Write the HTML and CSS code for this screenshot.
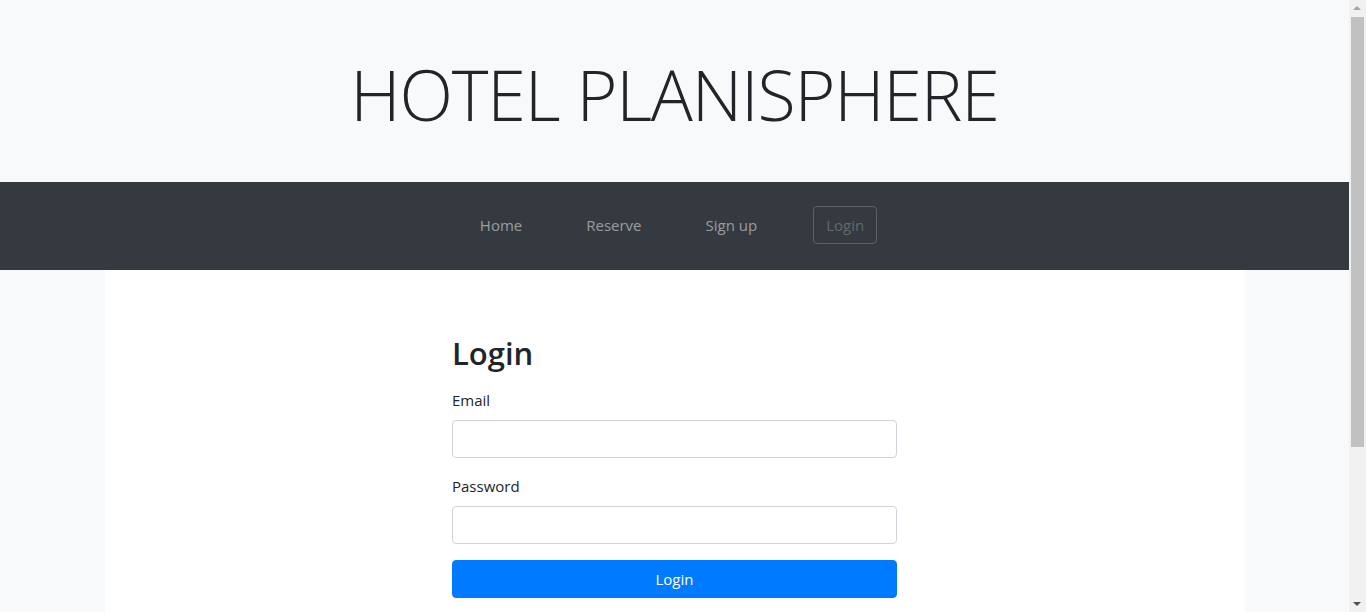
FILE: index.html
```html
<!DOCTYPE html>
<html lang="en">
<head>
<meta charset="utf-8">
<title>Login | HOTEL PLANISPHERE</title>
<link rel="stylesheet" href="styles.css">
</head>
<body>
<div class="page">
  <header class="masthead">
    <h1 class="brand">HOTEL PLANISPHERE</h1>
  </header>
  <nav class="navbar">
    <ul class="nav-list">
      <li><a class="nav-link" href="#">Home</a></li>
      <li><a class="nav-link" href="#">Reserve</a></li>
      <li><a class="nav-link" href="#">Sign up</a></li>
      <li><a class="nav-btn" href="#">Login</a></li>
    </ul>
  </nav>
  <main class="container">
    <div class="form-col">
      <h2 class="title">Login</h2>
      <form class="login-form">
        <div class="form-group">
          <label for="email">Email</label>
          <input id="email" type="email" class="form-control">
        </div>
        <div class="form-group">
          <label for="password">Password</label>
          <input id="password" type="password" class="form-control">
        </div>
        <button type="button" class="btn-primary">Login</button>
      </form>
    </div>
  </main>
</div>
<div class="scrollbar" aria-hidden="true">
  <span class="sb-arrow sb-up"></span>
  <span class="sb-thumb"></span>
  <span class="sb-arrow sb-down"></span>
</div>
</body>
</html>
```
FILE: styles.css
```css
* { box-sizing: border-box; }
html, body { margin: 0; padding: 0; }
html { overflow: hidden; }
body {
  font-family: "Open Sans", "Noto Sans", "Liberation Sans", sans-serif;
  font-size: 15px;
  line-height: 24px;
  color: #212529;
  background: #f8f9fa;
}
.page {
  width: calc(100% - 17px);
}
.masthead {
  background: #f8f9fa;
  padding: 52px 0 46px;
  text-align: center;
}
.brand {
  margin: 0;
  font-size: 70px;
  font-weight: 300;
  line-height: 84px;
  letter-spacing: -1.2px;
  color: #212529;
}
.navbar {
  background: #343a40;
  padding: 24px 0 26px;
}
.nav-list {
  list-style: none;
  margin: 0;
  padding: 0;
  display: flex;
  justify-content: center;
  align-items: center;
  gap: 48px;
}
.nav-link {
  display: block;
  padding: 7px 8px;
  color: rgba(255,255,255,.5);
  text-decoration: none;
}
.nav-btn {
  display: block;
  padding: 6px 12px;
  border: 1px solid #5b6167;
  border-radius: 4px;
  color: #62686e;
  text-decoration: none;
}
.container {
  width: 1140px;
  margin: 0 auto;
  background: #fff;
  padding: 65px 15px 218px;
  display: flex;
  justify-content: center;
}
.form-col {
  width: 475px;
  padding: 0 15px;
}
.title {
  margin: 0 0 16px;
  font-size: 31px;
  font-weight: 600;
  line-height: 37px;
}
.form-group { margin-bottom: 16px; }
label {
  display: inline-block;
  margin-bottom: 8px;
}
.form-control {
  display: block;
  width: 100%;
  height: 38px;
  padding: 6px 12px;
  font: inherit;
  color: #495057;
  background: #fff;
  border: 1px solid #ced4da;
  border-radius: 4px;
}
.btn-primary {
  display: block;
  width: 100%;
  height: 38px;
  padding: 6px 12px;
  font: inherit;
  color: #fff;
  background: #007bff;
  border: 1px solid #007bff;
  border-radius: 4px;
}
.scrollbar {
  position: fixed;
  top: 0;
  right: 0;
  width: 17px;
  height: 100%;
  background: #f1f1f1;
}
.sb-thumb {
  position: absolute;
  left: 2px;
  right: 2px;
  top: 17px;
  height: 430px;
  background: #c1c1c1;
}
.sb-arrow {
  position: absolute;
  left: 4px;
  width: 0;
  height: 0;
  border-left: 4px solid transparent;
  border-right: 4px solid transparent;
}
.sb-up {
  top: 6px;
  border-bottom: 4px solid #a3a3a3;
}
.sb-down {
  bottom: 6px;
  border-top: 4px solid #505050;
}
```
